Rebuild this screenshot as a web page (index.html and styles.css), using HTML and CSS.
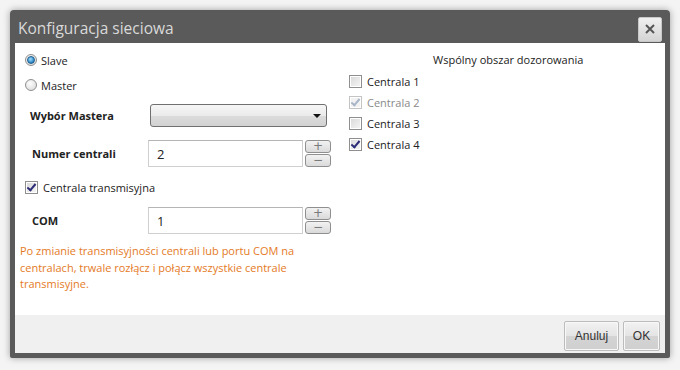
FILE: index.html
```html
<!DOCTYPE html>
<html>
<head>
    <title>Konfiguracja sieciowa</title>
    <link rel="stylesheet" href="styles.css">
</head>
<body>
    <div class="dialog">
        <div class="titlebar">
            <span class="title">Konfiguracja sieciowa</span>
            <button class="close">
                <svg width="10" height="10" viewBox="0 0 10 10">
                    <path d="M1 1 L9 9 M9 1 L1 9" stroke="#555" stroke-width="2" fill="none"/>
                </svg>
            </button>
        </div>

        <div class="content">
            <div class="left">
                <label class="radio-row first">
                    <span class="radio checked"></span>
                    <span>Slave</span>
                </label>
                <label class="radio-row second">
                    <span class="radio"></span>
                    <span>Master</span>
                </label>

                <div class="field-row select-row">
                    <span class="field-label">Wybór Mastera</span>
                    <div class="select"><span class="arrow"></span></div>
                </div>

                <div class="field-row spin-row">
                    <span class="field-label">Numer centrali</span>
                    <div class="spinner">
                        <div class="input">2</div>
                        <div class="spin-buttons">
                            <span class="spin-btn">+</span>
                            <span class="spin-btn">&minus;</span>
                        </div>
                    </div>
                </div>

                <label class="check-row transmit">
                    <span class="check checked"></span>
                    <span>Centrala transmisyjna</span>
                </label>

                <div class="field-row spin-row com-row">
                    <span class="field-label">COM</span>
                    <div class="spinner">
                        <div class="input">1</div>
                        <div class="spin-buttons">
                            <span class="spin-btn">+</span>
                            <span class="spin-btn">&minus;</span>
                        </div>
                    </div>
                </div>

                <p class="note">Po zmianie transmisyjności centrali lub portu COM na centralach, trwale rozłącz i połącz wszystkie centrale transmisyjne.</p>
            </div>

            <div class="right">
                <div class="area-title">Wspólny obszar dozorowania</div>
                <div class="area-list">
                    <label class="check-row">
                        <span class="check"></span>
                        <span>Centrala 1</span>
                    </label>
                    <label class="check-row disabled">
                        <span class="check checked"></span>
                        <span>Centrala 2</span>
                    </label>
                    <label class="check-row">
                        <span class="check"></span>
                        <span>Centrala 3</span>
                    </label>
                    <label class="check-row">
                        <span class="check checked"></span>
                        <span>Centrala 4</span>
                    </label>
                </div>
            </div>
        </div>

        <div class="footer">
            <button class="button cancel">Anuluj</button>
            <button class="button ok">OK</button>
        </div>
    </div>
</body>
</html>
```

FILE: styles.css
```css
body {
    margin: 0;
    padding: 10px;
    background-color: #f4f4f4;
    font-family: "Open Sans", "Noto Sans", sans-serif;
    font-size: 11px;
    color: #222;
}
.dialog {
    width: 650px;
    height: 343px;
    background-color: #5a5a5a;
    padding: 0 5px 5px 5px;
    border-radius: 4px 4px 2px 2px;
    box-shadow: 0 0 7px rgba(0, 0, 0, 0.35);
    display: flex;
    flex-direction: column;
}
.titlebar {
    height: 33px;
    display: flex;
    align-items: center;
    justify-content: space-between;
}
.title {
    color: #d9d9d9;
    font-size: 15.5px;
    padding-left: 3px;
    padding-top: 2px;
}
.close {
    width: 24px;
    height: 25px;
    margin-top: 5px;
    margin-right: 3px;
    border: 1px solid #c8c8c8;
    border-radius: 2px;
    background: linear-gradient(#f0f0f0, #d4d4d4);
    padding: 0;
    display: flex;
    align-items: center;
    justify-content: center;
}
.content {
    flex: 1;
    background-color: #fff;
    display: grid;
    grid-template-columns: 330px 1fr;
}
.left {
    display: flex;
    flex-direction: column;
    padding-left: 10px;
}
.radio-row,
.check-row {
    display: flex;
    align-items: center;
    gap: 4px;
    height: 20px;
}
.radio-row.first {
    margin-top: 7px;
}
.radio-row.second {
    margin-top: 5px;
}
.radio {
    width: 10px;
    height: 10px;
    border: 1px solid #8e8f8f;
    border-radius: 50%;
    background: radial-gradient(circle at 40% 35%, #fdfdfd, #d6d6d6);
    display: flex;
    align-items: center;
    justify-content: center;
}
.radio.checked::after {
    content: "";
    width: 6px;
    height: 6px;
    border-radius: 50%;
    border: 1px solid #1c5c8c;
    background: radial-gradient(circle at 40% 35%, #9fdcff, #2a86c4 70%, #1a5f94);
}
.field-row {
    display: flex;
    align-items: center;
}
.field-label {
    width: 120px;
    padding-left: 5px;
    font-weight: bold;
    color: #222;
}
.select-row {
    margin-top: 9px;
}
.select {
    width: 175px;
    height: 21px;
    border: 1px solid #707070;
    border-radius: 3px;
    background: linear-gradient(#f6f6f6, #ebebeb 50%, #dcdcdc 51%, #d2d2d2);
    display: flex;
    align-items: center;
    justify-content: flex-end;
}
.arrow {
    width: 0;
    height: 0;
    border-left: 4px solid transparent;
    border-right: 4px solid transparent;
    border-top: 4px solid #111;
    margin-right: 5px;
}
.spin-row {
    margin-top: 13px;
}
.field-row.spin-row .field-label {
    width: 116px;
    padding-left: 7px;
}
.spinner {
    display: flex;
    align-items: center;
    gap: 2px;
}
.input {
    width: 145px;
    height: 25px;
    border: 1px solid #cfcfcf;
    border-top-color: #b5b5b5;
    background: #fff;
    display: flex;
    align-items: center;
    padding-left: 8px;
    font-size: 13px;
    color: #222;
}
.spin-buttons {
    display: flex;
    flex-direction: column;
    gap: 1px;
}
.spin-btn {
    width: 24px;
    height: 11px;
    border: 1px solid #8f8f8f;
    border-radius: 3px;
    background: linear-gradient(#f2f2f2, #dadada);
    color: #7a7a7a;
    font-size: 12px;
    line-height: 10px;
    text-align: center;
    font-family: "DejaVu Sans", sans-serif;
}
.check-row.transmit {
    margin-top: 10px;
}
.com-row {
    margin-top: 10px;
}
.check {
    width: 11px;
    height: 11px;
    border: 1px solid #8f8f8f;
    background: linear-gradient(135deg, #d8d8d8, #f6f6f6);
    box-shadow: inset 0 0 0 1px #fff;
    position: relative;
    margin-right: 1px;
}
.check.checked::after {
    content: "";
    position: absolute;
    left: 3px;
    top: 0px;
    width: 3px;
    height: 7px;
    border-right: 2px solid #2b2b78;
    border-bottom: 2px solid #2b2b78;
    transform: rotate(40deg);
}
.check-row.disabled {
    color: #8a8a8a;
}
.check-row.disabled .check {
    border-color: #c4c4c4;
    background: #f2f2f2;
}
.check-row.disabled .check.checked::after {
    border-color: #a9b6c8;
}
.note {
    margin: 9px 0 0 -5px;
    width: 300px;
    color: #e57a26;
    line-height: 16.5px;
}
.right {
    display: flex;
    flex-direction: column;
}
.area-title {
    margin-top: 9px;
    padding-left: 88px;
    height: 17px;
}
.area-list {
    display: flex;
    flex-direction: column;
    gap: 1px;
    margin-top: 2px;
    padding-left: 4px;
}
.footer {
    height: 38px;
    background-color: #f0f0f0;
    display: flex;
    justify-content: flex-end;
    align-items: flex-start;
    gap: 4px;
    padding: 6px 5px 0 0;
    box-sizing: border-box;
}
.button {
    height: 30px;
    border: 1px solid #bcbcbc;
    border-radius: 2px;
    background: linear-gradient(#f2f2f2, #e4e4e4 50%, #d4d4d4 51%, #cfcfcf);
    box-shadow: inset 0 0 0 1px #f8f8f8;
    font-family: "Liberation Sans", Arial, sans-serif;
    font-size: 12px;
    color: #333;
    padding: 0;
}
.button.cancel {
    width: 55px;
}
.button.ok {
    width: 37px;
}
```
